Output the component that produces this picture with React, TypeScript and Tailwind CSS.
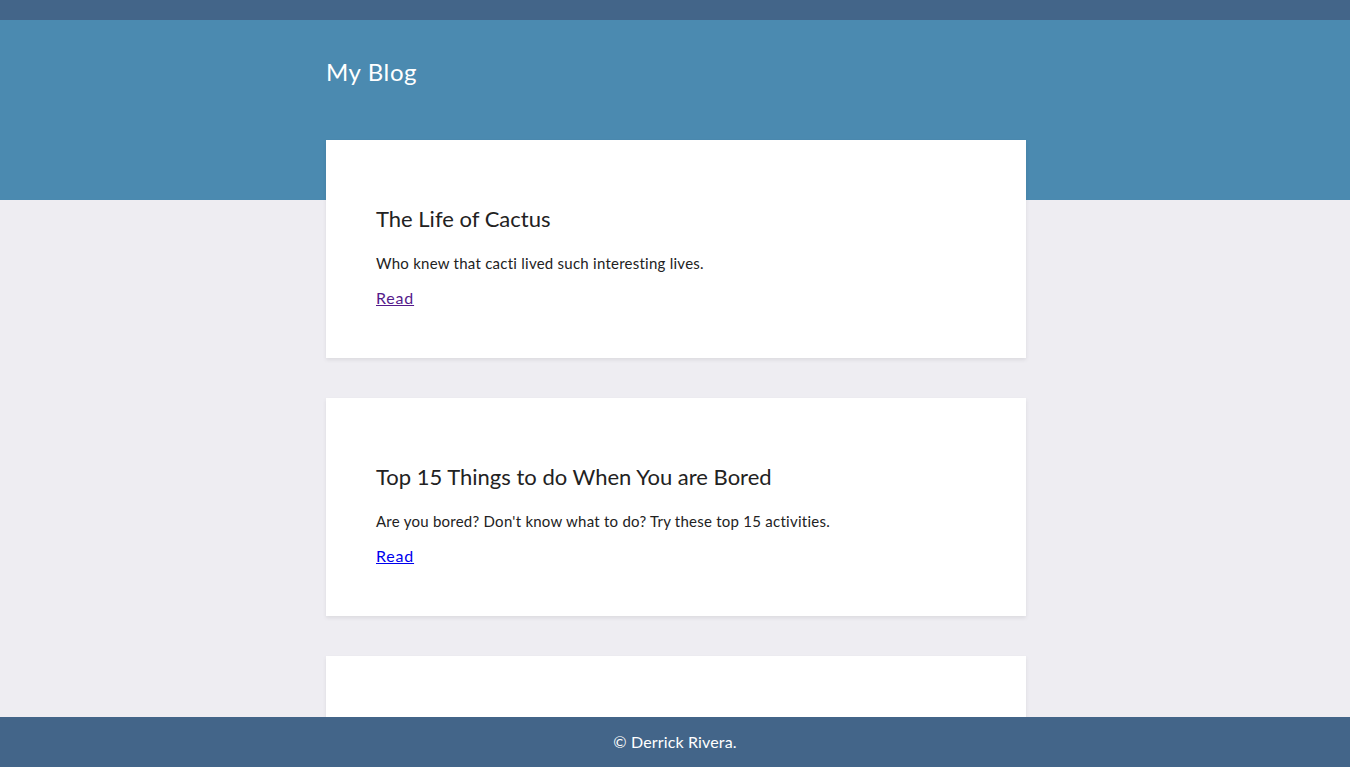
import React from "react";

const posts = [
  { title: "The Life of Cactus", body: "Who knew that cacti lived such interesting lives.", visited: true },
  { title: "Top 15 Things to do When You are Bored", body: "Are you bored? Don't know what to do? Try these top 15 activities.", visited: false },
  { title: "Tips for Writing a Blog", body: "Writing is hard. Here are a few tips to make it easier.", visited: false },
];

export default function App() {
  return (
    <div className="min-h-screen bg-[#eeedf2] font-['Lato','Open_Sans',sans-serif] text-[#222]">
      <div className="h-[20px] bg-[#436589]" />
      <header className="h-[180px] bg-[#4b8ab0]">
        <div className="mx-auto w-[702px] pl-[2px] pt-[36px]">
          <h1 className="text-[24px] leading-[32px] tracking-[0.6px] text-white">My Blog</h1>
        </div>
      </header>
      <main className="mx-auto -mt-[60px] w-[702px] pl-[2px] pb-[90px]">
        <div className="flex flex-col gap-[40px]">
          {posts.map((p) => (
            <article key={p.title} className="bg-white px-[50px] pt-[50px] pb-[49px] shadow-[0_2px_4px_rgba(0,0,0,0.08)]">
              <h2 className="mt-[16px] text-[22px] leading-[26px] text-[#222]">{p.title}</h2>
              <p className="mt-[20px] text-[15px] leading-[22px] tracking-[0.25px] text-[#222]">{p.body}</p>
              <a href="#" className={"mt-[13px] block w-fit text-[16px] leading-[22px] tracking-[0.8px] underline " + (p.visited ? "text-[#551a8b]" : "text-[#0000ee]")}>Read</a>
            </article>
          ))}
        </div>
      </main>
      <footer className="fixed bottom-0 left-0 right-0 flex h-[50px] items-center justify-center bg-[#436589] text-[16px] tracking-[0.15px] text-white">
        © Derrick Rivera.
      </footer>
    </div>
  );
}
